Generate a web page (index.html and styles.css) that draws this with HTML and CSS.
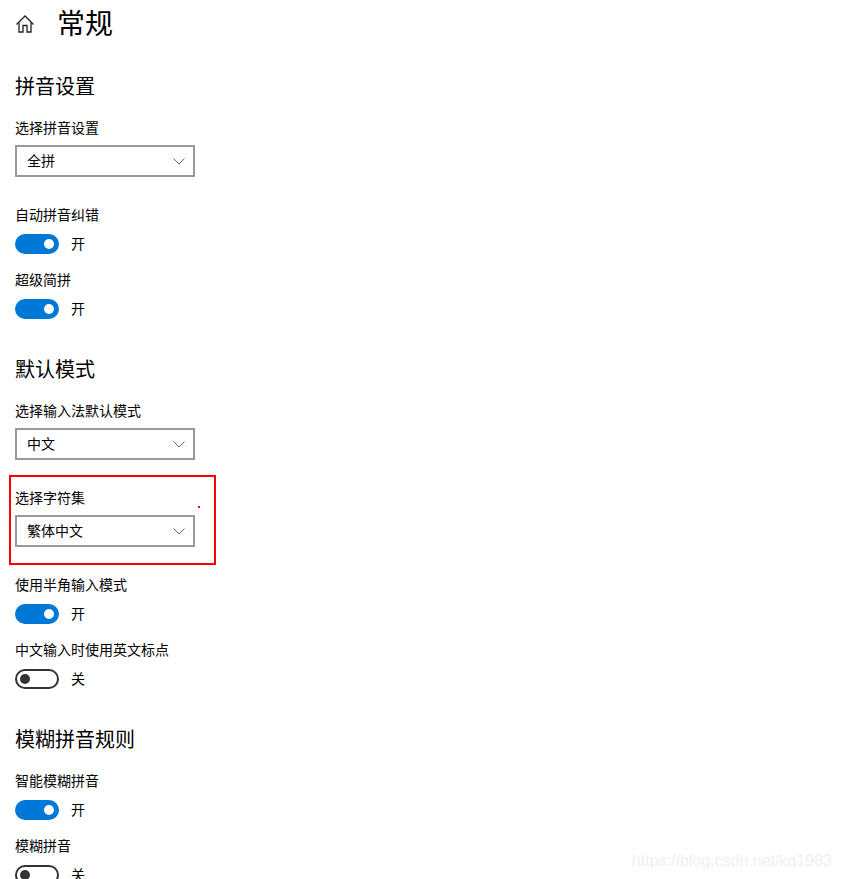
FILE: index.html
```html
<!DOCTYPE html>
<html lang="zh-CN">
<head>
    <meta charset="UTF-8">
    <title>常规</title>
    <link rel="stylesheet" href="styles.css">
</head>
<body>
    <header class="page-head">
        <svg class="home-icon" width="20" height="20" viewBox="0 0 20 20" fill="none" stroke="#222" stroke-width="1.3">
            <path d="M1.5 10.5 L10 2 L18.500 10.500"/>
            <path d="M4 8.500 V18 H8 V11.500 H12 V18 H16 V8.500"/>
        </svg>
        <h1>常规</h1>
    </header>

    <section class="group">
        <h2>拼音设置</h2>
        <div class="field">
            <label>选择拼音设置</label>
            <div class="select"><span>全拼</span><svg class="chevron" width="12" height="7" viewBox="0 0 12 7" fill="none" stroke="#666" stroke-width="1"><path d="M0.500 0.500 L6 6 L11.500 0.500"/></svg></div>
        </div>
        <div class="field">
            <label>自动拼音纠错</label>
            <div class="switch-row"><span class="switch on"></span><span class="state">开</span></div>
        </div>
        <div class="field">
            <label>超级简拼</label>
            <div class="switch-row"><span class="switch on"></span><span class="state">开</span></div>
        </div>
    </section>

    <section class="group">
        <h2>默认模式</h2>
        <div class="field">
            <label>选择输入法默认模式</label>
            <div class="select"><span>中文</span><svg class="chevron" width="12" height="7" viewBox="0 0 12 7" fill="none" stroke="#666" stroke-width="1"><path d="M0.500 0.500 L6 6 L11.500 0.500"/></svg></div>
        </div>
        <div class="field">
            <label>选择字符集</label>
            <div class="select"><span>繁体中文</span><svg class="chevron" width="12" height="7" viewBox="0 0 12 7" fill="none" stroke="#666" stroke-width="1"><path d="M0.500 0.500 L6 6 L11.500 0.500"/></svg></div>
        </div>
        <div class="field">
            <label>使用半角输入模式</label>
            <div class="switch-row"><span class="switch on"></span><span class="state">开</span></div>
        </div>
        <div class="field">
            <label>中文输入时使用英文标点</label>
            <div class="switch-row"><span class="switch"></span><span class="state">关</span></div>
        </div>
    </section>

    <section class="group">
        <h2>模糊拼音规则</h2>
        <div class="field">
            <label>智能模糊拼音</label>
            <div class="switch-row"><span class="switch on"></span><span class="state">开</span></div>
        </div>
        <div class="field">
            <label>模糊拼音</label>
            <div class="switch-row"><span class="switch"></span><span class="state">关</span></div>
        </div>
    </section>

    <div class="red-box"></div>
    <div class="red-dot"></div>
    <div class="watermark">https://blog.csdn.net/kq1983</div>
</body>
</html>
```

FILE: styles.css
```css
@charset "utf-8";
* {
    margin: 0;
    padding: 0;
    box-sizing: border-box;
}
html, body {
    height: 879px;
    overflow: hidden;
}
body {
    position: relative;
    background-color: #fff;
    color: #000;
    font-family: "Noto Sans CJK SC", "Liberation Sans", sans-serif;
    font-size: 14px;
    padding-left: 15px;
}
.page-head {
    display: flex;
    align-items: center;
    height: 48px;
    margin-bottom: 25px;
}
.home-icon {
    margin-right: 22px;
}
h1 {
    font-size: 28px;
    font-weight: 400;
    line-height: 44px;
    padding-bottom: 4px;
}
.group {
    margin-bottom: 37px;
}
h2 {
    font-size: 20px;
    font-weight: 400;
    line-height: 26px;
    margin-bottom: 19px;
}
.field {
    margin-bottom: 16px;
}
.field:has(.select) {
    margin-bottom: 28px;
}
.group:nth-of-type(1) .field:last-child,
.group:nth-of-type(2) .field:last-child {
    margin-bottom: 0;
}
label {
    display: block;
    line-height: 18px;
    margin-bottom: 9px;
}
.field:has(.switch-row) label {
    margin-bottom: 11px;
}
.select {
    display: flex;
    align-items: center;
    justify-content: space-between;
    width: 180px;
    height: 32px;
    border: 2px solid #999;
    padding: 0 8px 0 10px;
    line-height: 18px;
}
.select span {
    padding-bottom: 2px;
}
.switch-row {
    display: flex;
    align-items: center;
    gap: 12px;
    height: 20px;
}
.state {
    line-height: 18px;
    padding-bottom: 2px;
}
.switch {
    position: relative;
    display: block;
    width: 44px;
    height: 20px;
    border: 2px solid #333;
    border-radius: 10px;
    background-color: #fff;
}
.switch::after {
    content: "";
    position: absolute;
    top: 3px;
    left: 3px;
    width: 10px;
    height: 10px;
    border-radius: 50%;
    background-color: #333;
}
.switch.on {
    border: none;
    background-color: #0078d7;
}
.switch.on::after {
    top: 5px;
    left: 29px;
    background-color: #fff;
}
.red-box {
    position: absolute;
    left: 9px;
    top: 475px;
    width: 207px;
    height: 90px;
    border: 2px solid #f00;
}
.red-dot {
    position: absolute;
    left: 198px;
    top: 506px;
    width: 2px;
    height: 2px;
    background-color: #f00;
}
.watermark {
    position: absolute;
    right: 9px;
    top: 850px;
    font-family: "Liberation Sans", sans-serif;
    font-size: 16px;
    line-height: 22px;
    color: #f0f0f0;
}
```
